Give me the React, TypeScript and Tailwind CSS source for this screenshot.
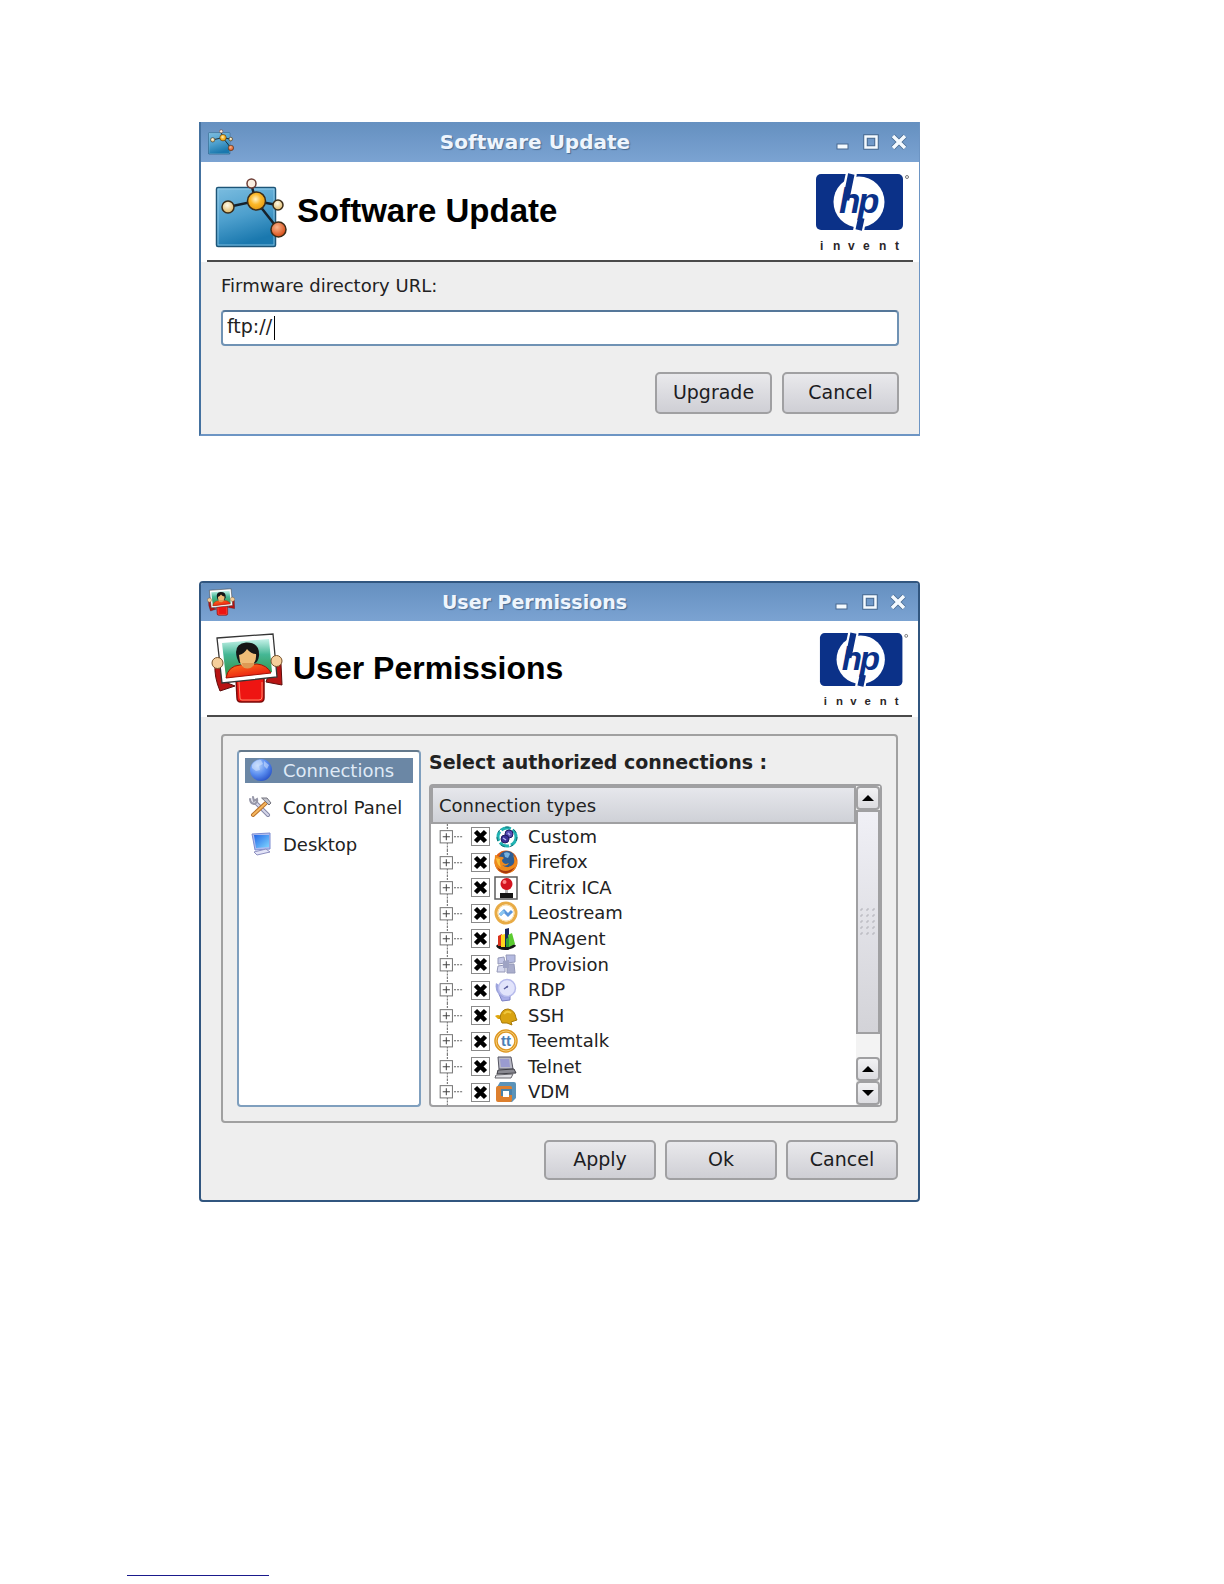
import React, { useState } from "react";
import clsx from "clsx";

type IconProps = { className?: string };

const UpdateIcon: React.FC<IconProps> = ({ className }) => (
  <svg viewBox="0 0 76 72" className={className} aria-hidden="true">
    <defs>
      <linearGradient id="upd-square" x1="0" y1="0" x2="0.3" y2="1">
        <stop offset="0" stopColor="#7cbde0" />
        <stop offset="0.55" stopColor="#4d9fcd" />
        <stop offset="1" stopColor="#1a78ae" />
      </linearGradient>
      <radialGradient id="upd-gold" cx="0.45" cy="0.4" r="0.6">
        <stop offset="0" stopColor="#fff3c4" />
        <stop offset="0.5" stopColor="#fbb829" />
        <stop offset="1" stopColor="#e59a12" />
      </radialGradient>
      <radialGradient id="upd-cream" cx="0.45" cy="0.35" r="0.6">
        <stop offset="0" stopColor="#fffbea" />
        <stop offset="1" stopColor="#e0bb6c" />
      </radialGradient>
      <radialGradient id="upd-red" cx="0.4" cy="0.35" r="0.6">
        <stop offset="0" stopColor="#f9b48c" />
        <stop offset="1" stopColor="#d9531e" />
      </radialGradient>
    </defs>
    <rect x="3.5" y="10.5" width="59" height="59" rx="1.5" fill="url(#upd-square)" stroke="#1d5577" strokeWidth="1.5" />
    <rect x="5" y="12" width="56" height="56" fill="none" stroke="#a4d6ef" strokeWidth="1" opacity="0.7" />
    <g stroke="#16222c" strokeWidth="2.5">
      <path d="M15 30 L43 24 L64 28 M43 24 L38 7 M43 24 L65 52" fill="none" />
    </g>
    <g stroke="#3b2c18" strokeWidth="1.5">
      <circle cx="38.5" cy="6.5" r="4.5" fill="#fbeee0" stroke="#6d3d35" />
      <circle cx="15" cy="30" r="6" fill="url(#upd-cream)" />
      <circle cx="65" cy="28" r="5" fill="url(#upd-cream)" />
      <circle cx="43.5" cy="24" r="9" fill="url(#upd-gold)" />
      <circle cx="65.5" cy="52.5" r="7.5" fill="url(#upd-red)" />
    </g>
  </svg>
);

const UserIcon: React.FC<IconProps> = ({ className }) => (
  <svg viewBox="0 0 72 72" className={className} aria-hidden="true">
    <defs>
      <linearGradient id="usr-photo" x1="0" y1="0" x2="0" y2="1">
        <stop offset="0" stopColor="#c7f3ea" />
        <stop offset="0.4" stopColor="#45b795" />
        <stop offset="1" stopColor="#2f8f3c" />
      </linearGradient>
      <linearGradient id="usr-shirt" x1="0" y1="0" x2="0.6" y2="1">
        <stop offset="0" stopColor="#ff7a1e" />
        <stop offset="1" stopColor="#e8150f" />
      </linearGradient>
    </defs>
    <path d="M4 32 L12 34 L14 50 L24 54 L9 59 Q3 45 4 32 Z" fill="#b81413" stroke="#5d0d0b" />
    <path d="M62 30 L70 32 L71 53 L55 50 Z" fill="#b81413" stroke="#5d0d0b" />
    <path d="M25 46 L53 46 L53 66 Q53 70 49 70 L30 70 Q26 70 26 66 Z" fill="#ee1512" stroke="#7a0d0b" strokeWidth="1.5" />
    <path d="M28 50 L29 66 Q29 68 31 68 L48 68 Q51 68 51 65 L51 50" fill="none" stroke="#ff8a6a" strokeWidth="1" />
    <path d="M6 6 L62 2 L66 45 L11 51 Z" fill="#fff" stroke="#353535" strokeWidth="1.3" />
    <path d="M11 11 L58 7 L61 40 L15 46 Z" fill="url(#usr-photo)" />
    <path d="M15 46 Q17 34 29 33 L46 32 Q56 33 60 41 Z" fill="url(#usr-shirt)" stroke="#a31208" />
    <path d="M26 26 Q22 12 35 10.5 Q49 10 48 24 Q47 30 44 31 L28 31 Z" fill="#161616" />
    <path d="M28 23 Q33 22 36 17 Q40 22 45 22 Q46 31 38 35 Q32 38 29 30 Z" fill="#efbc77" />
    <path d="M32 35 Q38 39 43 33 L43 31 L31 31 Z" fill="#dd9a55" />
    <circle cx="6.5" cy="31" r="5.5" fill="#f5cf9b" stroke="#79532b" />
    <circle cx="65.5" cy="29" r="5.5" fill="#f5cf9b" stroke="#79532b" />
  </svg>
);

const HpLogo: React.FC<IconProps> = ({ className }) => (
  <svg viewBox="0 0 96 80" className={className} role="img" aria-label="hp invent">
    <rect x="1" y="1" width="87" height="56" rx="5" fill="#0b3188" />
    <circle cx="44" cy="29" r="25.5" fill="#fff" />
    {/* ascender and descender run out to the edge of the plate */}
    <path d="M36.5 0 L33 16 M46 45 L43.500 58" stroke="#fff" strokeWidth="11" fill="none" />
    <path d="M36.300 1 L31 27 M46.300 45 L43.700 57" stroke="#0b3188" strokeWidth="6.5" fill="none" />
    <text x="24 43" y="40" fontFamily="Liberation Sans" fontSize="35" fontWeight="700" fontStyle="italic" fill="#0b3188">hp</text>
    <circle cx="92" cy="4" r="1.5" fill="none" stroke="#777" />
    <text x="5 18 33 48 64 80" y="77" fontFamily="Liberation Sans" fontSize="12" fontWeight="700" fill="#2b2628">invent</text>
  </svg>
);

const GlobeIcon = () => (
  <svg viewBox="0 0 24 24" className="size-6">
    <defs>
      <radialGradient id="globe" cx="0.35" cy="0.3" r="0.75">
        <stop offset="0" stopColor="#b8d4fb" />
        <stop offset="0.55" stopColor="#5c8ff0" />
        <stop offset="1" stopColor="#2a55c9" />
      </radialGradient>
    </defs>
    <circle cx="12" cy="12" r="11" fill="url(#globe)" />
    <path d="M3 7 Q7 1 12 2 L14 6 L10 8 L11 12 L7 13 L3 10 Z M15 3 L20 7 L18 11 L15 8 Z" fill="#dce9ff" opacity="0.5" />
  </svg>
);

const ToolsIcon = () => (
  <svg viewBox="0 0 24 24" className="size-6" fill="none" strokeLinecap="round">
    <path d="M6 7 L19 20" stroke="#8688a6" strokeWidth="4" />
    <path d="M6 7 L19 20" stroke="#d5d6ea" strokeWidth="2" />
    <path d="M1 4 Q1 8 5 9 Q9 8 8 4 L5 6 L4 2" stroke="#9697a8" strokeWidth="2" fill="#e4e4ee" />
    <path d="M18 7 L4 20" stroke="#b7702a" strokeWidth="4" />
    <path d="M17 8 L4 20" stroke="#f6b65d" strokeWidth="2" />
    <path d="M13 3 L18 3 L22 8 L20 10 L16 6 Z" fill="#c3c3cc" stroke="#74747e" />
  </svg>
);

const DesktopIcon = () => (
  <svg viewBox="0 0 24 24" className="size-6">
    <defs>
      <linearGradient id="screen" x1="0" y1="0" x2="1" y2="1">
        <stop offset="0" stopColor="#2468e8" />
        <stop offset="1" stopColor="#7fd6ff" />
      </linearGradient>
    </defs>
    <path d="M3 2 L21 1 L21 17 L6 18 Z" fill="#aebcf0" stroke="#7c8cd0" />
    <path d="M5 3 L20 3 L20 15 L7 16 Z" fill="url(#screen)" />
    <path d="M5 20 L17 17 L21 20 L8 23 Z" fill="#e4e5f8" stroke="#8d8fc0" />
  </svg>
);

const CustomIcon = () => (
  <svg viewBox="0 0 24 24" className="size-6" fill="none">
    <circle cx="13" cy="12" r="9" stroke="#21b3b3" strokeWidth="3" strokeDasharray="10 2" />
    <circle cx="13" cy="12" r="10" stroke="#0f6b70" strokeWidth="1" strokeDasharray="4 5" />
    <ellipse cx="15" cy="9" rx="4" ry="4" fill="#5a4fb5" stroke="#221c63" />
    <ellipse cx="11" cy="14" rx="4" ry="4" fill="#3a2f96" stroke="#221c63" />
    <path d="M9 13 L12 15 M14 8 L16 10" stroke="#b9b4f2" strokeWidth="1.5" />
  </svg>
);

const FirefoxIcon = () => (
  <svg viewBox="0 0 24 24" className="size-6">
    <circle cx="12" cy="12" r="11.5" fill="#dd5c12" />
    <circle cx="13" cy="9" r="8" fill="#2c5e95" />
    <path d="M10 3 Q14 1 16 4 L14 8 L11 7 Z" fill="#7ab2dd" />
    <path d="M1 5 Q3 5 5 7 Q8 6 10 8 L8 10 Q8 13 12 14 L15 13 Q13 17 8 15 Q14 20 20 14 Q21 10 19 5 Q24 10 23 15 Q20 23 12 23.5 Q2 22 .5 13 Z" fill="#ee8a1d" />
    <path d="M3 17 Q11 25 21 17 Q17 23 12 23.5 Q6 23 3 17 Z" fill="#a8380f" />
    <path d="M2 8 Q3 15 7 17 Q5 12 6 9 Z" fill="#f9c13b" />
  </svg>
);

const CitrixIcon = () => (
  <svg viewBox="0 0 24 24" className="size-6">
    <rect x="1" y="1" width="22" height="22" fill="#fff" stroke="#5d5d5d" strokeWidth="1.5" />
    <path d="M11 11 L14 11 L14 18 L11 18 Z" fill="#bbb" />
    <circle cx="12.5" cy="8" r="6" fill="#d41420" />
    <circle cx="10.5" cy="6" r="2" fill="#ff8585" />
    <rect x="6" y="17" width="13" height="5" fill="#151515" />
  </svg>
);

const LeostreamIcon = () => (
  <svg viewBox="0 0 24 24" className="size-6" fill="none">
    <circle cx="12" cy="12" r="10" stroke="#e8ab45" strokeWidth="3" />
    <circle cx="12" cy="12" r="8" stroke="#f9dca3" />
    <path d="M6 14 L10 10 L14 14 L18 10" stroke="#5a96dc" strokeWidth="3" />
    <path d="M6 14 L10 10" stroke="#8bc6f0" strokeWidth="3" />
  </svg>
);

const PnAgentIcon = () => (
  <svg viewBox="0 0 24 24" className="size-6">
    <path d="M2 19 Q4 16 12 17 Q21 16 22 19 Q18 23 11 23 Q4 23 2 19 Z" fill="#151515" />
    <path d="M4 9 L8 7 L9 19 L4 19 Z" fill="#d9331d" />
    <path d="M7 8 L11 7 L11 20 L7 20 Z" fill="#ffd51c" />
    <path d="M11 2 L15 1 L15 17 L11 18 Z" fill="#17265c" />
    <path d="M14 8 L18 6 L21 17 L15 20 Z" fill="#5ccc31" />
    <path d="M12 12 L15 10 L15 20 L12 20 Z" fill="#2d9e35" />
  </svg>
);

const ProvisionIcon = () => (
  <svg viewBox="0 0 24 24" className="size-6" stroke="#9498b8">
    <path d="M4 5 L10 4 L11 10 L4 11 Z" fill="#c5c8e6" />
    <path d="M12 2 L21 2 L21 9 L13 10 Z" fill="#b4bae0" />
    <path d="M4 13 L11 12 L11 19 L3 19 Z" fill="#d5d8ee" />
    <path d="M13 11 L20 11 L21 20 L13 20 Z" fill="#a9adcb" />
    <path d="M9 8 L15 7 L15 15 L9 15 Z" fill="#9ea3c4" stroke="none" />
  </svg>
);

const RdpIcon = () => (
  <svg viewBox="0 0 24 24" className="size-6">
    <path d="M5 16 L16 17 L16 22 L8 23 Z" fill="#aaaee8" stroke="#7b80c4" />
    <path d="M2 5 Q0 14 8 19 Q16 21 19 16 Z" fill="#9da4dc" />
    <circle cx="13" cy="10" r="8.5" fill="#e2e4fb" stroke="#b7bbec" strokeWidth="1.5" />
    <path d="M10 11 L14 8 M13 10 L13 8" stroke="#5b5f9d" strokeWidth="1.5" />
  </svg>
);

const SshIcon = () => (
  <svg viewBox="0 0 24 24" className="size-6">
    <path d="M1 12 Q4 10 7 12 L8 15 L4 15 Z" fill="#e0a70d" />
    <path d="M6 14 Q7 5 14 5 Q21 6 22 14 L23 16 L17 18 L18 21 L13 19 L8 19 Z" fill="#d9a311" stroke="#a87a08" />
    <path d="M10 10 Q13 6 17 9" stroke="#f0c83e" strokeWidth="2" fill="none" />
  </svg>
);

const TeemtalkIcon = () => (
  <svg viewBox="0 0 24 24" className="size-6">
    <circle cx="12" cy="12" r="10" fill="#fff" stroke="#dd9621" strokeWidth="3.5" />
    <circle cx="12" cy="12" r="10" fill="none" stroke="#f7cf77" strokeWidth="1" />
    <text x="12" y="17" textAnchor="middle" fontFamily="Liberation Sans" fontWeight="700" fontSize="15" fill="#4b7fb5">tt</text>
  </svg>
);

const TelnetIcon = () => (
  <svg viewBox="0 0 24 24" className="size-6">
    <path d="M4 2 L17 2 L19 14 L5 14 Z" fill="#b9b9c6" stroke="#555562" />
    <path d="M6 4 L15 4 L16 12 L7 12 Z" fill="#9a9bd0" />
    <path d="M4 15 L20 14 L22 18 L3 19 Z" fill="#8a8a92" stroke="#3d3d44" />
    <path d="M2 20 L19 19 L17 23 L1 23 Z" fill="#dedee2" stroke="#66666c" />
  </svg>
);

const VdmIcon = () => (
  <svg viewBox="0 0 24 24" className="size-6">
    <path d="M6 2 H20 Q22 2 22 4 V18 L18 22 H6 L3 7 Z" fill="#5b93b9" />
    <rect x="2" y="6" width="16" height="16" rx="2" fill="#dd7f2e" />
    <path d="M7 9 H18 V15 H15 V12 H10 V16 H7 Z" fill="#4a82ab" />
    <rect x="9" y="11" width="6" height="6" fill="#fff" />
  </svg>
);

const sections = [
  { name: "Connections", Icon: GlobeIcon },
  { name: "Control Panel", Icon: ToolsIcon },
  { name: "Desktop", Icon: DesktopIcon },
];

const connections = [
  { name: "Custom", Icon: CustomIcon },
  { name: "Firefox", Icon: FirefoxIcon },
  { name: "Citrix ICA", Icon: CitrixIcon },
  { name: "Leostream", Icon: LeostreamIcon },
  { name: "PNAgent", Icon: PnAgentIcon },
  { name: "Provision", Icon: ProvisionIcon },
  { name: "RDP", Icon: RdpIcon },
  { name: "SSH", Icon: SshIcon },
  { name: "Teemtalk", Icon: TeemtalkIcon },
  { name: "Telnet", Icon: TelnetIcon },
  { name: "VDM", Icon: VdmIcon },
];

const WindowControls = () => (
  <div className="flex items-center gap-3">
    <button aria-label="Minimize" className="size-4">
      <svg viewBox="0 0 16 16">
        <rect x="2" y="10" width="11" height="5" fill="#f4faff" stroke="#48698f" />
      </svg>
    </button>
    <button aria-label="Maximize" className="size-4">
      <svg viewBox="0 0 16 16" fill="none">
        <rect x="2.5" y="2.5" width="11" height="11" stroke="#48698f" strokeWidth="4.5" />
        <rect x="2.5" y="2.5" width="11" height="11" stroke="#f4faff" strokeWidth="2.5" />
      </svg>
    </button>
    <button aria-label="Close" className="size-4">
      <svg viewBox="0 0 16 16" fill="none">
        <path d="M2 2 L14 14 M14 2 L2 14" stroke="#48698f" strokeWidth="5" />
        <path d="M2 2 L14 14 M14 2 L2 14" stroke="#f4faff" strokeWidth="3.5" />
      </svg>
    </button>
  </div>
);

type TitleBarProps = { title: string; icon: React.ReactNode; className: string };

const TitleBar: React.FC<TitleBarProps> = ({ title, icon, className }) => (
  <div className="flex items-center pl-1.5 pr-3 bg-linear-to-b from-[#6590c0] to-[#7ba3d2]">
    {icon}
    <h2 className={clsx("flex-1 text-center font-bold text-[#eef5fd] [text-shadow:1px_1px_1px_#48698f]", className)}>{title}</h2>
    <WindowControls />
  </div>
);

type PushButtonProps = { children: React.ReactNode; className?: string };

const PushButton: React.FC<PushButtonProps> = ({ children, className }) => (
  <button
    className={clsx(
      "rounded-[5px] border-2 border-[#a0a0a2] bg-linear-to-b from-[#e9e9ec] to-[#cfcfd5] pb-0.5 text-[19px] leading-6 text-[#1c1c22]",
      className
    )}
  >
    {children}
  </button>
);

const SoftwareUpdate = () => (
  <section className="border-2 border-t-0 border-r border-[#6d95c4] border-l-[#44719f] bg-[#eeeeee]">
    <TitleBar title="Software Update" className="text-[20px] leading-10" icon={<UpdateIcon className="w-7 h-[26px]" />} />
    <header className="bg-white px-1.5">
      <div className="h-[100px] flex items-center border-b-2 border-[#4a4a4a] pl-1.5">
        <UpdateIcon className="w-[76px] h-[72px] mt-1" />
        <h1 className="pl-2 font-[Liberation_Sans] text-[33px] font-bold text-black">Software Update</h1>
        <HpLogo className="w-24 h-20 mt-1 mr-0.5 ml-auto" />
      </div>
    </header>
    <form className="px-5 pt-3 pb-5" onSubmit={(e) => e.preventDefault()}>
      <label htmlFor="url" className="block text-[18px] leading-6 text-[#222]">
        Firmware directory URL:
      </label>
      <div className="relative mt-3">
        <input
          id="url"
          type="text"
          defaultValue="ftp://"
          className="block w-full h-9 rounded-sm border-2 border-[#6f92b4] border-t-[#557799] bg-white px-1 pb-1 text-[19px] text-[#222] outline-none"
        />
        {/* text cursor */}
        <span className="absolute left-[53px] top-1.5 w-px h-6 bg-black" />
      </div>
      <div className="mt-[26px] flex justify-end gap-2.5">
        <PushButton className="w-[117px] h-[42px]">Upgrade</PushButton>
        <PushButton className="w-[117px] h-[42px]">Cancel</PushButton>
      </div>
    </form>
  </section>
);

const ScrollButton: React.FC<{ down?: boolean }> = ({ down }) => (
  <button
    aria-label={down ? "Scroll down" : "Scroll up"}
    className="w-full h-6 shrink-0 flex items-center justify-center rounded-sm border-2 border-[#a0a0a2] bg-linear-to-b from-[#f2f2f4] to-[#dcdce0]"
  >
    <svg viewBox="0 0 12 6" className="w-3 h-1.5">
      <path d={down ? "M0 0 L12 0 L6 6 Z" : "M0 6 L12 6 L6 0 Z"} fill="#000" />
    </svg>
  </button>
);

const ScrollBar = () => (
  <div className="w-6 flex flex-col bg-[#f3f3f3]">
    <ScrollButton />
    <div className="h-[224px] flex items-center justify-center border-2 border-[#a0a0a2] bg-linear-to-b from-[#f0f0f6] to-[#d3d3d8]">
      <svg viewBox="0 0 16 30" className="w-4 h-[30px]">
        {[2, 8, 14, 20, 26].map((y) =>
          [1, 7, 13].map((x) => <path key={`${x}-${y}`} d={`M${x} ${y + 2} v-2 h2`} stroke="#b3b3ba" fill="none" />)
        )}
      </svg>
    </div>
    <div className="mt-auto">
      <ScrollButton />
      <ScrollButton down />
    </div>
  </div>
);

type ConnectionRowProps = { name: string; icon: React.ReactNode };

const ConnectionRow: React.FC<ConnectionRowProps> = ({ name, icon }) => {
  const [checked, setChecked] = useState(true);

  return (
    <li className="flex-1 min-h-0 flex items-center pl-2">
      <button aria-label={`Expand ${name}`} className="w-8 h-full shrink-0">
        <svg viewBox="0 0 32 25" className="w-8 h-full" preserveAspectRatio="xMidYMid slice" fill="none">
          <path d="M8.5 0 V26 M15 12.5 H23" stroke="#666" strokeDasharray="2 1" />
          <rect x="1.5" y="6.5" width="12" height="12" fill="#fff" stroke="#777" />
          <path d="M4 12.5 H11 M7.5 9 V16" stroke="#444" />
        </svg>
      </button>
      <label className="flex items-center">
        <span className="relative size-[19px]">
          <input
            type="checkbox"
            checked={checked}
            onChange={(e) => setChecked(e.target.checked)}
            className="block size-[19px] appearance-none border border-[#8a8a8a] bg-white"
          />
          {checked && (
            <svg viewBox="0 0 19 19" className="absolute inset-0 pointer-events-none">
              <path d="M4.5 4.5 L14.5 14.5 M14.5 4.5 L4.5 14.5" stroke="#000" strokeWidth="4.5" />
            </svg>
          )}
        </span>
        <span className="ml-1">{icon}</span>
        <span className="ml-2.5 leading-6">{name}</span>
      </label>
    </li>
  );
};

const UserPermissions = () => {
  const [section, setSection] = useState("Connections");

  return (
    <section className="overflow-hidden rounded-sm border-2 border-[#31567f] bg-[#eeeeee]">
      <TitleBar title="User Permissions" className="text-[19px] leading-[38px]" icon={<UserIcon className="size-7" />} />
      <header className="bg-white px-1.5">
        <div className="h-24 flex items-center border-b-2 border-[#4a4a4a] pl-1">
          <UserIcon className="size-[72px]" />
          <h1 className="pl-2.5 font-[Liberation_Sans] text-[32px] font-bold text-black">User Permissions</h1>
          <HpLogo className="w-[91px] h-[76px] mr-0.5 mt-1 ml-auto" />
        </div>
      </header>

      <div className="px-5 pt-[17px] pb-5">
        <div className="flex rounded-sm border-2 border-[#a0a0a0] p-3.5 gap-2">
          <ul className="w-[184px] shrink-0 rounded-sm border-2 border-[#7f9fbe] border-t-[#64798c] bg-white px-1.5 pt-1.5 text-[18px]">
            {sections.map(({ name, Icon }) => (
              <li key={name} className="mb-3">
                <button
                  onClick={() => setSection(name)}
                  className={clsx(
                    "w-full h-[25px] flex items-center gap-2.5 pl-1 pb-px whitespace-nowrap text-left",
                    section === name ? "bg-[#6b87a5] text-[#dfeaf6]" : "text-[#222]"
                  )}
                >
                  <Icon />
                  {name}
                </button>
              </li>
            ))}
          </ul>

          <div className="flex-1 min-w-0">
            <h3 className="text-[19px] leading-6 font-bold text-[#222]">Select authorized connections :</h3>
            <div className="mt-2.5 h-[323px] flex rounded-sm border-2 border-[#a0a0a2] bg-white">
              <div className="flex-1 flex flex-col text-[18px] text-[#222]">
                <div className="h-[38px] flex items-center border-2 border-[#a0a0a2] bg-linear-to-b from-[#e6e7ec] to-[#cfd1d7] pl-1.5">
                  Connection types
                </div>
                <ul className="flex-1 min-h-0 flex flex-col">
                  {connections.map(({ name, Icon }) => (
                    <ConnectionRow key={name} name={name} icon={<Icon />} />
                  ))}
                </ul>
              </div>
              <ScrollBar />
            </div>
          </div>
        </div>

        <div className="mt-[17px] flex justify-end gap-[9px]">
          <PushButton className="w-28 h-10">Apply</PushButton>
          <PushButton className="w-28 h-10">Ok</PushButton>
          <PushButton className="w-28 h-10">Cancel</PushButton>
        </div>
      </div>
    </section>
  );
};

export default function App() {
  return (
    <main className="min-h-screen flex flex-col bg-white pt-[122px] pb-2 font-['DejaVu_Sans',sans-serif]">
      <div className="w-full max-w-[920px] pl-[199px] flex flex-col gap-[145px]">
        <SoftwareUpdate />
        <UserPermissions />
      </div>
      <a href="#top" aria-label="Back to top" className="mt-auto ml-[127px] block w-[142px] border-b border-[#1a1a8c]" />
    </main>
  );
}
